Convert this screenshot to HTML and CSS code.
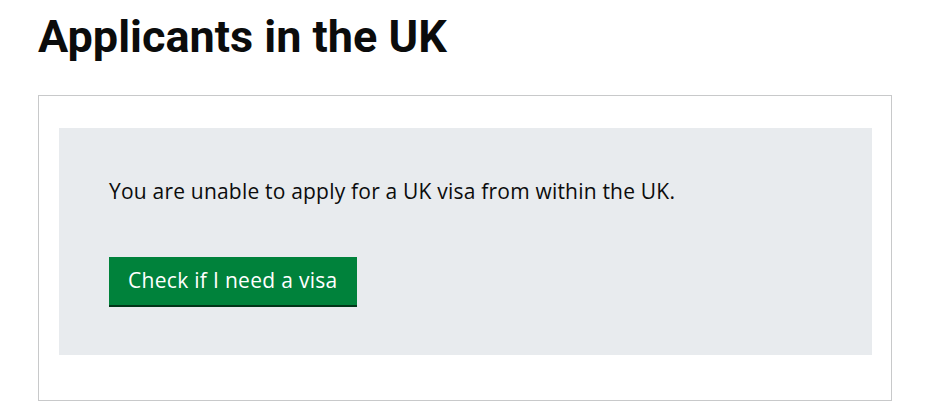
FILE: index.html
```html
<!DOCTYPE html>
<html lang="en">
<head>
<meta charset="utf-8">
<title>Applicants in the UK</title>
<link rel="stylesheet" href="styles.css">
</head>
<body>
<main class="page">
  <h1 class="heading">Applicants in the UK</h1>
  <section class="card">
    <div class="panel">
      <p class="panel-text">You are unable to apply for a UK visa from within the UK.</p>
      <a class="button" href="#">Check if I need a visa</a>
    </div>
  </section>
</main>
</body>
</html>
```

FILE: styles.css
```css
html, body {
  margin: 0;
  padding: 0;
  background: #ffffff;
}
body {
  font-family: "Open Sans", "Liberation Sans", Arial, sans-serif;
  color: #0b0c0c;
}
.page {
  padding: 12px 49px 0 38px;
}
.heading {
  margin: 0;
  font-family: Roboto, "Liberation Sans", Arial, sans-serif;
  font-size: 45px;
  line-height: 50px;
  font-weight: 700;
}
.card {
  margin-top: 33px;
  border: 1px solid #c8c9ca;
  padding: 32px 19px 45px 20px;
}
.panel {
  background: #e8ebee;
  padding: 51px 50px 50px 50px;
  display: flex;
  flex-direction: column;
  align-items: flex-start;
}
.panel-text {
  margin: 0 0 53px 0;
  font-size: 21px;
  line-height: 25px;
  letter-spacing: 0.2px;
}
.button {
  display: inline-block;
  background: #00823b;
  color: #ffffff;
  text-decoration: none;
  font-size: 21px;
  line-height: 25px;
  letter-spacing: 0.3px;
  padding: 11px 19px 12px 19px;
  box-shadow: 0 2px 0 #003618;
}
```
